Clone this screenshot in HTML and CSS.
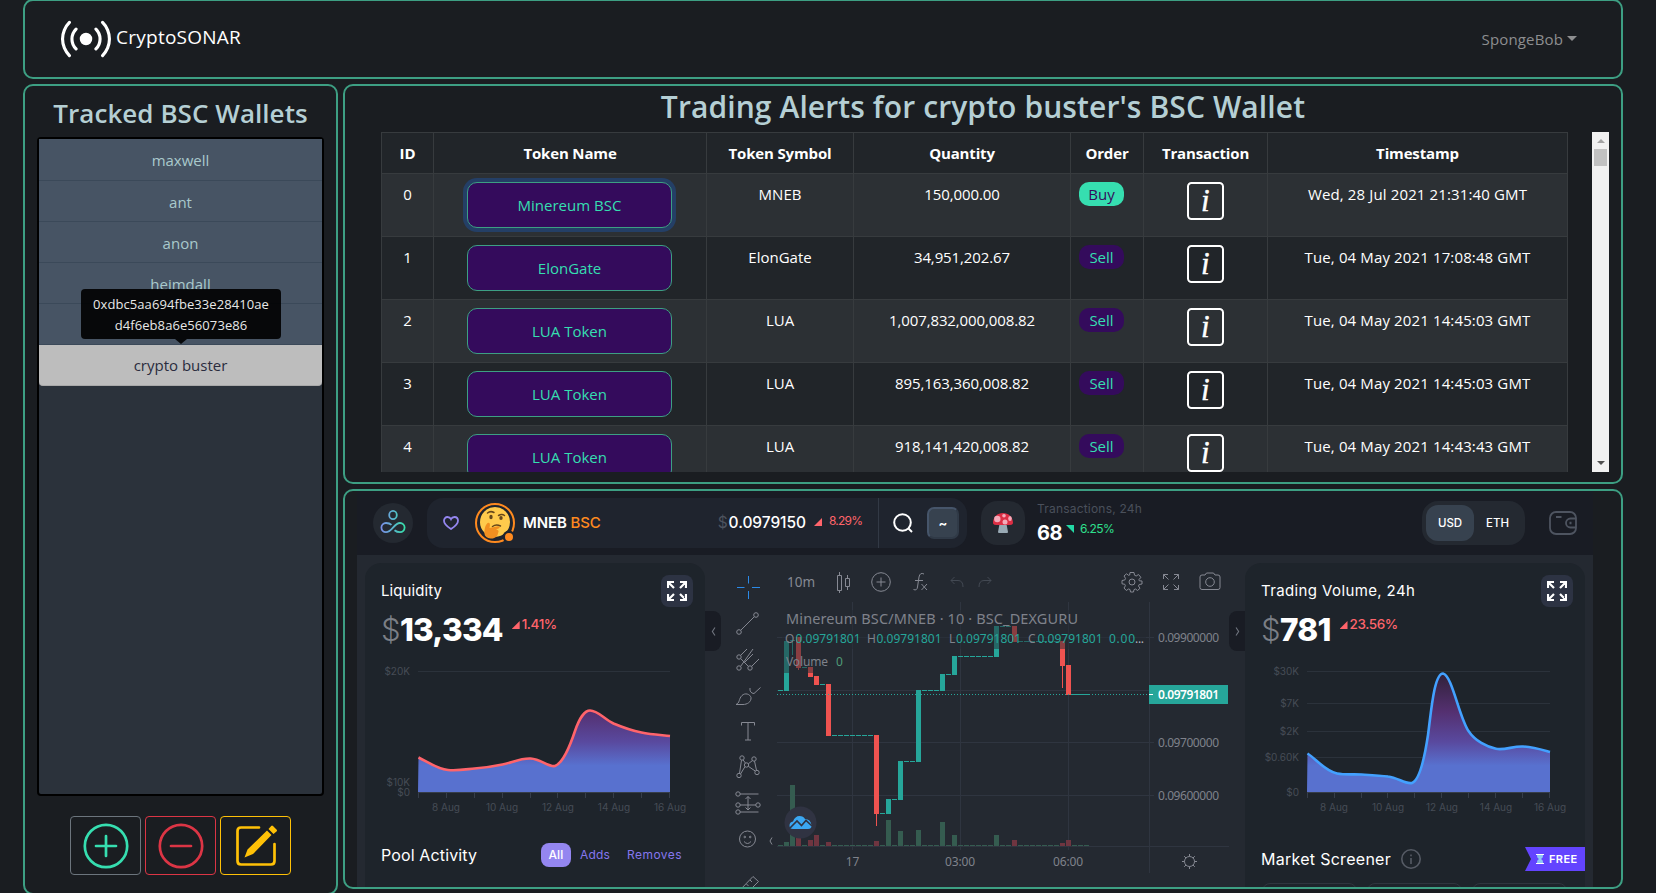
FILE: index.html
```html
<!DOCTYPE html>
<html lang="en">
<head>
<meta charset="utf-8">
<title>CryptoSONAR</title>
<link rel="stylesheet" href="styles.css">
</head>
<body>
<svg class="defs" aria-hidden="true">
  <defs>
    <linearGradient id="area" gradientUnits="userSpaceOnUse" x1="0" y1="672" x2="0" y2="792">
      <stop offset="0" stop-color="#2f2138"/><stop offset=".33" stop-color="#543070"/><stop offset=".58" stop-color="#59499e"/><stop offset=".78" stop-color="#5871cf"/><stop offset="1" stop-color="#5871cf"/>
    </linearGradient>
    <linearGradient id="guru" gradientUnits="userSpaceOnUse" x1="8" y1="0" x2="32" y2="0">
      <stop offset="0" stop-color="#7b8fe8"/><stop offset=".5" stop-color="#5bb4cf"/><stop offset="1" stop-color="#35e0a8"/>
    </linearGradient>
    <symbol id="info" viewBox="0 0 37 38">
      <rect x="1" y="1" width="35" height="36" rx="3.5" fill="none" stroke="#fff" stroke-width="2"/>
      <text x="18.3" y="29" text-anchor="middle" class="info-i">i</text>
    </symbol>
    <symbol id="expand" viewBox="0 0 20 20">
      <path d="M1 7V1H7M1.5 1.5 7 7M13 1H19V7M18.500 1.500 13 7M1 13V19H7M1.500 18.500 7 13M13 19H19V13M18.500 18.500 13 13" fill="none" stroke="#fff" stroke-width="2.200"/>
    </symbol>
  </defs>
</svg>

<header class="panel topnav">
  <a class="brand">
    <svg class="brand-icon" viewBox="0 0 16 16" fill="#fff"><path d="M3.05 3.05a7 7 0 0 0 0 9.9.5.5 0 0 1-.707.707 8 8 0 0 1 0-11.314.5.5 0 0 1 .707.707zm2.122 2.122a4 4 0 0 0 0 5.656.5.5 0 1 1-.708.708 5 5 0 0 1 0-7.072.5.5 0 0 1 .708.708zm5.656-.708a.5.5 0 0 1 .708 0 5 5 0 0 1 0 7.072.5.5 0 1 1-.708-.708 4 4 0 0 0 0-5.656.5.5 0 0 1 0-.708zm2.122-2.12a.5.5 0 0 1 .707 0 8 8 0 0 1 0 11.313.5.5 0 0 1-.707-.707 7 7 0 0 0 0-9.9.5.5 0 0 1 0-.707zM10 8a2 2 0 1 1-4 0 2 2 0 0 1 4 0z"/></svg>
    <span class="brand-name">CryptoSONAR</span>
  </a>
  <div class="user">SpongeBob<span class="caret"></span></div>
</header>

<main class="layout">
  <aside class="panel wallets">
    <h3 class="wallets-title">Tracked BSC Wallets</h3>
    <ul class="wallet-list">
      <li class="wallet">maxwell</li>
      <li class="wallet">ant</li>
      <li class="wallet">anon</li>
      <li class="wallet">heimdall</li>
      <li class="wallet"></li>
      <li class="wallet selected">crypto buster
        <div class="tooltip">0xdbc5aa694fbe33e28410ae<br>d4f6eb8a6e56073e86</div>
      </li>
    </ul>
    <div class="wallet-actions">
      <button class="act add"><svg viewBox="0 0 46 46"><circle cx="23" cy="23" r="21.200"/><path d="M23 13V33M13 23H33"/></svg></button>
      <button class="act remove"><svg viewBox="0 0 46 46"><circle cx="23" cy="23" r="21.200"/><path d="M13 23H33"/></svg></button>
      <button class="act edit"><svg viewBox="0 0 46 46"><path d="M26 4.500H8Q4.500 4.500 4.500 8V38Q4.500 41.500 8 41.500H38Q41.500 41.500 41.500 38V21"/><path class="solid" d="M34 7.500 38.500 12 20 31 11.500 34.500 14.500 26.500ZM35.500 6 38.200 3Q39 2 40 3L43.500 6.500Q44.500 7.500 43.500 8.500L40.500 11Z"/></svg></button>
    </div>
  </aside>

  <div class="content">
    <section class="panel alerts">
      <h2 class="alerts-title">Trading Alerts for crypto buster's BSC Wallet</h2>
      <div class="scroller">
        <div class="viewport">
          <table class="trades">
            <colgroup><col class="c-id"><col class="c-name"><col class="c-sym"><col class="c-qty"><col class="c-ord"><col class="c-tx"><col class="c-time"></colgroup>
            <thead><tr><th>ID</th><th>Token Name</th><th>Token Symbol</th><th>Quantity</th><th>Order</th><th>Transaction</th><th>Timestamp</th></tr></thead>
            <tbody>
              <tr><td>0</td><td><button class="token focus">Minereum BSC</button></td><td>MNEB</td><td class="qty">150,000.00</td><td class="order"><span class="badge buy">Buy</span></td><td><svg class="info"><use href="#info"/></svg></td><td class="time">Wed, 28 Jul 2021 21:31:40 GMT</td></tr>
              <tr><td>1</td><td><button class="token">ElonGate</button></td><td>ElonGate</td><td class="qty">34,951,202.67</td><td class="order"><span class="badge">Sell</span></td><td><svg class="info"><use href="#info"/></svg></td><td class="time">Tue, 04 May 2021 17:08:48 GMT</td></tr>
              <tr><td>2</td><td><button class="token">LUA Token</button></td><td>LUA</td><td class="qty">1,007,832,000,008.82</td><td class="order"><span class="badge">Sell</span></td><td><svg class="info"><use href="#info"/></svg></td><td class="time">Tue, 04 May 2021 14:45:03 GMT</td></tr>
              <tr><td>3</td><td><button class="token">LUA Token</button></td><td>LUA</td><td class="qty">895,163,360,008.82</td><td class="order"><span class="badge">Sell</span></td><td><svg class="info"><use href="#info"/></svg></td><td class="time">Tue, 04 May 2021 14:45:03 GMT</td></tr>
              <tr><td>4</td><td><button class="token">LUA Token</button></td><td>LUA</td><td class="qty">918,141,420,008.82</td><td class="order"><span class="badge">Sell</span></td><td><svg class="info"><use href="#info"/></svg></td><td class="time">Tue, 04 May 2021 14:43:43 GMT</td></tr>
            </tbody>
          </table>
        </div>
        <div class="scrollbar"><span class="arrow up"></span><span class="thumb"></span><span class="arrow down"></span></div>
      </div>
    </section>

    <section class="panel dex">
      <div class="dex-app">
        <div class="dex-bar">
          <div class="guru"><svg viewBox="0 0 40 40" fill="none" stroke="url(#guru)" stroke-width="1.800"><ellipse cx="20" cy="12" rx="3.800" ry="4.200"/><path d="M18.500 21.800C16.500 20 14.500 20 13 20A4.600 4.600 0 0 0 13 29.200C19 29.200 21 20 27 20A4.600 4.600 0 0 1 27 29.200C25 29.200 23.500 28.800 21.500 27.200"/></svg></div>
          <div class="search">
            <svg class="heart" viewBox="0 0 16 14" fill="none" stroke="#9486f0" stroke-width="1.800"><path d="M8 13C4 10.500 1 8 1 4.800 1 2.500 2.500 1 4.500 1 6 1 7.300 1.800 8 3.200 8.700 1.800 10 1 11.500 1 13.500 1 15 2.500 15 4.800 15 8 12 10.500 8 13Z"/></svg>
            <svg class="coin" viewBox="0 0 40 40"><circle cx="20" cy="20" r="19" fill="none" stroke="#ff8a1f" stroke-width="2"/><circle cx="20" cy="19" r="15" fill="#ffcb4c"/><g fill="none" stroke="#65471b" stroke-width="1.500" stroke-linecap="round"><path d="M12.500 10Q15.500 7.500 19 9.500M23.500 12.500Q27 10.500 29.500 12.500M17.500 23.500Q21 21 25.500 23"/></g><ellipse cx="16" cy="14" rx="1.700" ry="2.200" fill="#65471b"/><ellipse cx="26" cy="15" rx="1.700" ry="2" fill="#65471b"/><path d="M9.500 31C9 26 11 20 13.500 19.800 15.500 20 15 23 14.500 25L23 23.200C25 23 25 25 23.500 25.500L20.500 26.500C24 26.500 24 29 23 30 23 33 20 36 15.500 35.500 12 35 10 33.500 9.500 31Z" fill="#f19020"/><circle cx="34" cy="34" r="6.500" fill="#1f242e"/><circle cx="34" cy="34" r="4" fill="#ff8a1f"/></svg>
            <span class="pair">MNEB <span class="chain">BSC</span></span>
            <span class="price"><span class="cur">$</span>0.0979150</span>
            <span class="tri up"></span><span class="pct">8.29%</span>
            <div class="search-tools">
              <svg class="lens" viewBox="0 0 20 20" fill="none" stroke="#fff" stroke-width="2"><circle cx="9.500" cy="9.500" r="8.300"/><path d="M15.500 15.500 19 19"/></svg>
              <span class="key">~</span>
            </div>
          </div>
          <div class="shroom"><svg viewBox="0 0 20 20"><path d="M6.500 11H13.500L15 19Q15 20 14 20H6Q5 20 5 19Z" fill="#99aab5"/><path d="M0 10C0 4 4.500 0 10 0S20 4 20 10C20 12.500 16 12 10 12S0 12.500 0 10Z" fill="#dd2e44"/><g fill="#f4abba"><circle cx="4.300" cy="6" r="3.200"/><circle cx="12" cy="9" r="2.500"/><circle cx="11" cy="2.700" r="1.800"/><ellipse cx="17" cy="5.500" rx="1.800" ry="2.600"/></g></svg></div>
          <div class="txs">
            <div class="txs-label">Transactions, 24h</div>
            <div class="txs-row"><b class="txs-n">68</b><span class="tri down"></span><span class="txs-pct">6.25%</span></div>
          </div>
          <div class="units"><span class="unit on">USD</span><span class="unit">ETH</span></div>
          <svg class="purse" viewBox="0 0 28 24" fill="none" stroke="#4e5460" stroke-width="1.800"><rect x="1" y="1" width="26" height="22" rx="6"/><path d="M27 7.500H21.500A4.500 4.500 0 0 0 21.500 16.500H27M7 6H12.500"/><path d="M20.500 12H22.500" stroke-width="2.500"/></svg>
        </div>

        <div class="dex-body">
          <article class="card">
            <div class="card-head"><span class="card-title">Liquidity</span><span class="expand"><svg><use href="#expand"/></svg></span></div>
            <div class="figure"><span class="dollar">$</span><b class="amount">13,334</b><span class="tri up"></span><span class="delta">1.41%</span></div>
            <svg class="spark" viewBox="381 650 324 176">
              <path d="M418 671.500H670" stroke="#2b323b"/>
              <path d="M418.500 757.500C428 762 437 769 448 770C458 771 468 769 474.500 768.500S493 766.500 502.500 764.500S521 758 530.500 758.500C541 759 549 767.500 555 766C563 763 570 746 575 731C580 716 586 710.500 590 710.500C598 710.500 604 719 613.500 723.500C623 727.500 634 731 641.500 732.500C651 734.500 661 735 670 736V792H418Z" fill="url(#area)"/>
              <path d="M418.500 757.500C428 762 437 769 448 770C458 771 468 769 474.500 768.500S493 766.500 502.500 764.500S521 758 530.500 758.500C541 759 549 767.500 555 766C563 763 570 746 575 731C580 716 586 710.500 590 710.500C598 710.500 604 719 613.500 723.500C623 727.500 634 731 641.500 732.500C651 734.500 661 735 670 736" fill="none" stroke="#ff646b" stroke-width="2.600"/>
              <path d="M418 792.500H670M418.500 793V798M446.500 793V798M474.500 793V798M502.500 793V798M530.500 793V798M557.500 793V798M585.500 793V798M613.500 793V798M641.500 793V798M669.500 793V798" stroke="#363d49"/>
              <g class="tick end"><text x="410" y="674.500">$20K</text><text x="410" y="785.500">$10K</text><text x="410" y="795.500">$0</text></g>
              <g class="tick mid"><text x="446" y="811">8 Aug</text><text x="502" y="811">10 Aug</text><text x="558" y="811">12 Aug</text><text x="614" y="811">14 Aug</text><text x="670" y="811">16 Aug</text></g>
            </svg>
            <div class="pool"><span class="card-title wide">Pool Activity</span><span class="pool-tabs"><span class="ptab on">All</span><span class="ptab">Adds</span><span class="ptab removes">Removes</span></span></div>
          </article>

          <div class="tv">
            <div class="tv-left">
              <svg viewBox="0 0 28 28" class="cross"><path d="M14.500 3V10.500M14.500 18V26M3 14.500H10.500M18 14.500H26"/></svg>
              <svg viewBox="0 0 28 28"><circle cx="5" cy="23" r="2.300"/><circle cx="22" cy="6" r="2.300"/><path d="M6.700 21.300 20.300 7.700"/></svg>
              <svg viewBox="0 0 28 28"><circle cx="5" cy="12" r="2.200"/><circle cx="5" cy="23" r="2.200"/><circle cx="16" cy="23" r="2.200"/><path d="M6.700 10.300 13 4M6.600 21.400 19 4M6.600 13.500 14.500 21.500M17.500 21.500 25 14M11 17 19 9"/></svg>
              <svg viewBox="0 0 28 28"><path d="M2 23.500C6 22 4.500 18 8 14.500C11 11.500 16 13 17 16.500C17.500 21 13 23.500 9 23.500ZM16 7C15.500 10 17 12.500 20 12.500L26.500 6.500"/></svg>
              <svg viewBox="0 0 28 28"><path d="M7.500 8.500V5.500H20.500V8.500M14 5.500V23M11 23H17"/></svg>
              <svg viewBox="0 0 28 28"><circle cx="8" cy="5" r="2.200"/><circle cx="20" cy="6" r="2.200"/><circle cx="12.500" cy="12" r="2.200"/><circle cx="5" cy="22.500" r="2.200"/><circle cx="23" cy="19.500" r="2.200"/><path d="M7.500 7.200 5.500 20.300M9 6.800 11.500 10.200M14.300 10.800 18.500 7.500M20.500 8.200 22.500 17.300M11 13.600 6.500 21M14.300 13.300 21.200 18"/></svg>
              <svg viewBox="0 0 28 28"><circle cx="4" cy="5" r="2.200"/><circle cx="4" cy="16" r="2.200"/><circle cx="24" cy="16" r="2.200"/><circle cx="4" cy="23" r="2.200"/><path d="M6 5H24.500M6 16H22M6 23H24.500M14 7.500V21M11.500 10 14 7.500 16.500 10M11.500 18.500 14 21 16.500 18.500"/></svg>
              <svg viewBox="0 0 28 28"><circle cx="13.500" cy="14" r="8"/><path d="M10 16.500Q13.500 20.500 17 16.500"/><circle cx="10.800" cy="12" r=".8"/><circle cx="16.200" cy="12" r=".8"/></svg>
              <svg viewBox="0 0 28 28" class="ruler"><path d="M5 19 19 4.500 24.500 9.500 10 24ZM16 8 18 10M12.500 12 14.500 14"/></svg>
            </div>
            <div class="tv-top">
              <span class="interval">10m</span>
              <svg class="t1" viewBox="0 0 28 28"><path d="M8.500 7.500H12.500V22.500H8.500ZM10.500 4V7.500M10.500 22.500V25M16.500 10.500H20.500V18.500H16.500ZM18.500 7V10.500M18.500 18.500V22"/></svg>
              <svg class="t2" viewBox="0 0 28 28"><circle cx="14" cy="14" r="9.300"/><path d="M14 9.500V18.500M9.500 14H18.500"/></svg>
              <svg class="t3" viewBox="0 0 28 28"><path d="M18 6Q14 4 13 9L11.500 19Q11 23 7.500 21.500M9 12.500H17M15.500 16 21 22M21 16 15.500 22"/></svg>
              <svg class="t4 dim" viewBox="0 0 28 28"><path d="M11.500 9 8 12.500 11.500 16M8 12.500H15Q20 12.500 20 19"/></svg>
              <svg class="dim" viewBox="0 0 28 28"><path d="M16.500 9 20 12.500 16.500 16M20 12.500H13Q8 12.500 8 19"/></svg>
              <svg class="t5" viewBox="0 0 28 28"><circle cx="14" cy="14" r="3"/><path d="M12 4.500H16L16.500 7.200 18.200 8 20.500 6.500 23 9.500 20.800 11.500 21.300 12.800 24 13V16L21.200 16.500 20.500 18 22 20.300 19.500 22.500 17.500 21 16 21.600 15.500 24H12.500L12 21.500 10.500 21 8.300 22.500 6 20 7.400 17.800 6.800 16.300 4 15.800V12.500L6.800 12 7.500 10.300 6 8 8.500 5.800 10.500 7.300 11.700 7Z"/></svg>
              <svg class="t6" viewBox="0 0 28 28"><path d="M6.500 11V6.500H11M6.500 6.500 11.500 11.500M17 6.500H21.500V11M21.500 6.500 16.500 11.500M6.500 17V21.500H11M6.500 21.500 11.500 16.500M17 21.500H21.500V17M21.500 21.500 16.500 16.500"/></svg>
              <svg class="t7" viewBox="0 0 28 28"><path d="M6 7H9L10.500 5H17.500L19 7H22Q24 7 24 9V19.500Q24 21.500 22 21.500H6Q4 21.500 4 19.500V9Q4 7 6 7Z"/><circle cx="14" cy="14" r="4.300"/></svg>
            </div>
            <svg class="candles" viewBox="777 602 468 285" shape-rendering="crispEdges">
              <path class="grid" d="M777 637.500H1154M777 690.500H1154M777 742.500H1154M777 795.500H1154M852.500 602V850M960.500 602V850M1068.500 602V850"/>
              <path class="axis" d="M1149.500 602V873M777 846.500H1229"/>
              <g class="volume">
                <path stroke="#355c50" stroke-dasharray="5 1" d="M778 845.500H1089"/>
                <path fill="#355c50" d="M784 842h5v4h-5zM790 785h5v61h-5zM886 820h5v26h-5zM898 831h5v15h-5zM916 830h5v16h-5zM940 822h5v24h-5zM952 835h5v11h-5zM994 835h5v11h-5z"/>
                <path fill="#6f3540" d="M796 832h5v14h-5zM808 840h5v6h-5zM814 835h5v11h-5zM826 842h5v4h-5zM874 841h5v5h-5zM1012 840h5v6h-5zM1060 843h5v3h-5zM1066 840h5v6h-5z"/>
              </g>
              <path class="teal-line" d="M778 690.500H783M790 640.500H795M792.500 640V655M802 667.500H807M820 684.500H825M880 813.500H885M892 799.500H897M946 674.500H951M1072 694.500H1090"/>
              <path class="teal-line" stroke-dasharray="5 1" d="M832 735.500H873M904 761.500H915M922 690.500H939M958 656.500H993M1000 626.500H1011M1018 641.500H1059"/>
              <path class="teal" d="M784 641h5v50h-5zM886 799h5v15h-5zM898 761h5v39h-5zM916 690h5v72h-5zM940 674h5v17h-5zM952 656h5v19h-5zM994 626h5v31h-5z"/>
              <path class="red" d="M796 637h5v31h-5zM798 668h1v2h-1zM808 667h5v10h-5zM814 676h5v9h-5zM826 684h5v52h-5zM874 735h5v79h-5zM876 814h1v12h-1zM1012 626h5v16h-5zM1060 641h5v25h-5zM1062 666h1v22h-1zM1066 665h5v30h-5z"/>
              <path class="teal-line" stroke-dasharray="1 2" d="M777 694.500H1149"/>
              <path class="veil" d="M782 610H1146V649H850V673H782Z"/>
              <g class="tvt">
                <text x="786" y="624" class="sym" textLength="292">Minereum BSC/MNEB · 10 · BSC_DEXGURU</text>
                <text x="785" y="643">O</text><text x="867" y="643">H</text><text x="949" y="643">L</text><text x="1028" y="643">C</text>
                <g class="num"><text x="795.500" y="643" textLength="65">0.09791801</text><text x="876.500" y="643" textLength="65">0.09791801</text><text x="956" y="643" textLength="65">0.09791801</text><text x="1037.500" y="643" textLength="65">0.09791801</text><text x="1109" y="643" textLength="26">0.00</text></g>
                <text x="1135" y="643" class="dots" textLength="9">...</text>
                <text x="786" y="666" textLength="42">Volume</text><text x="836" y="666" class="vol0">0</text>
                <g class="axis-t"><text x="1158" y="642" textLength="61">0.09900000</text><text x="1158" y="747" textLength="61">0.09700000</text><text x="1158" y="800" textLength="61">0.09600000</text></g>
                <g class="axis-t mid"><text x="852.500" y="866">17</text><text x="960" y="866" textLength="30">03:00</text><text x="1068" y="866" textLength="30">06:00</text></g>
              </g>
              <path fill="#26a69a" d="M1149 685H1228V704H1149Z"/><path d="M1149 694.500H1153" stroke="#fff"/>
              <text x="1158" y="699" class="tag" textLength="61">0.09791801</text>
              <g shape-rendering="auto">
                <circle cx="800.500" cy="822.500" r="16" fill="#303342"/>
                <path d="M793 829Q789.500 829 789.500 825.500 789.500 822 793 821.500 795 816 799.500 816 803.500 816 805 819 810.500 819 811.500 825 812 829 808 829Z" fill="#3ba7f2"/><path d="M790 828 797 821 801.500 825.500 806 820.500 812 826" fill="none" stroke="#303342" stroke-width="1.600"/>
                <g fill="none" stroke="#868993"><circle cx="1189.500" cy="861.500" r="5"/><path d="M1189.500 854V856.500M1189.500 866.500V869M1182 861.500H1184.500M1194.500 861.500H1197M1184.200 856.200 1186 858M1193 865 1194.800 866.800M1184.200 866.800 1186 865M1193 858 1194.800 856.200"/></g>
              </g>
            </svg>
            <svg class="mini" viewBox="0 0 4 8"><path d="M3 .5 1 4 3 7.500"/></svg>
            <span class="flap left"><svg viewBox="0 0 4 8"><path d="M3.300 .5 1 4 3.300 7.500"/></svg></span>
            <span class="flap right"><svg viewBox="0 0 4 8"><path d="M.7 .5 3 4 .7 7.500"/></svg></span>
          </div>

          <article class="card">
            <div class="card-head"><span class="card-title vol">Trading Volume, 24h</span><span class="expand"><svg><use href="#expand"/></svg></span></div>
            <div class="figure"><span class="dollar">$</span><b class="amount">781</b><span class="tri up"></span><span class="delta">23.56%</span></div>
            <svg class="spark" viewBox="1261 650 324 176">
              <path d="M1307 671.500H1550M1307 703.500H1550M1307 731.500H1550M1307 757.500H1550" stroke="#2b323b"/>
              <path d="M1307.500 753.500C1316 759 1325 771 1337 773.500C1345 775 1353 774 1361.500 774.500S1380 775.500 1388 776.500C1398 777.500 1405 784.500 1412 783C1420 780 1425 755 1428 735C1431 713 1434 673.500 1443 673.500C1452 675 1459 717 1468.500 731C1475 741 1487 747 1496 748.800C1505 750.500 1513 746 1523 746.500C1533 747 1541 749.500 1550 752V792H1307Z" fill="url(#area)"/>
              <path d="M1307.500 753.500C1316 759 1325 771 1337 773.500C1345 775 1353 774 1361.500 774.500S1380 775.500 1388 776.500C1398 777.500 1405 784.500 1412 783C1420 780 1425 755 1428 735C1431 713 1434 673.500 1443 673.500C1452 675 1459 717 1468.500 731C1475 741 1487 747 1496 748.800C1505 750.500 1513 746 1523 746.500C1533 747 1541 749.500 1550 752" fill="none" stroke="#43a1ff" stroke-width="2.600"/>
              <path d="M1307 792.500H1550M1307.500 793V798M1334.500 793V798M1361.500 793V798M1387.500 793V798M1414.500 793V798M1441.500 793V798M1468.500 793V798M1495.500 793V798M1522.500 793V798M1549.500 793V798" stroke="#363d49"/>
              <g class="tick end"><text x="1299" y="674.500">$30K</text><text x="1299" y="706.500">$7K</text><text x="1299" y="734.500">$2K</text><text x="1299" y="760.500">$0.60K</text><text x="1299" y="795.500">$0</text></g>
              <g class="tick mid"><text x="1334" y="811">8 Aug</text><text x="1388" y="811">10 Aug</text><text x="1442" y="811">12 Aug</text><text x="1496" y="811">14 Aug</text><text x="1550" y="811">16 Aug</text></g>
            </svg>
            <div class="screener">
              <span class="card-title market">Market Screener</span>
              <svg class="hint" viewBox="0 0 20 20" fill="none" stroke="#565b65" stroke-width="1.600"><circle cx="10" cy="10" r="9.200"/><path d="M10 9V15M10 5.500V7.200"/></svg>
              <span class="free"><svg viewBox="0 0 8 10"><path d="M1 0H7V2Q7 4 5 5 7 6 7 8V10H1V8Q1 6 3 5 1 4 1 2Z" fill="#8fc7f5"/><path d="M0 .5H8M0 9.500H8" stroke="#fff"/></svg>FREE</span>
            </div>
            <div class="boxes"><span></span><span></span><span></span></div>
          </article>
        </div>
      </div>
    </section>
  </div>
</main>
</body>
</html>
```
FILE: styles.css
```css
*{box-sizing:border-box}
html,body{height:893px;overflow:hidden}
body{margin:0;padding:0 33px 0 23px;background:#1a1d21;color:#fff;font:15px/24px "Open Sans","Noto Sans",sans-serif}
h2,h3,ul{margin:0;padding:0}
button{font:inherit;background:none;padding:0}
svg{display:block;flex:none}
.defs{position:absolute;width:0;height:0}
.panel{border:2px solid #3d9f83;border-radius:10px;overflow:hidden}

.topnav{display:flex;justify-content:space-between;align-items:center;height:80px;margin-top:-1px;padding:0 44px 0 36px}
.brand{display:flex;align-items:center;gap:5px}
.brand-icon{width:50px;height:50px}
.brand-name{font-size:19px;line-height:26px;letter-spacing:.25px;padding-bottom:5px}
.user{display:flex;align-items:center;color:#8d8e90;letter-spacing:.15px}
.caret{margin:0 0 2px 4px;border:5px solid transparent;border-top-color:#8d8e90;border-bottom:0}

.layout{display:grid;grid-template-columns:315px 1fr;gap:5px;margin-top:5px;height:811px}
.wallets{padding:9px 12px 0}
.wallets-title{color:#b5cfd4;font-size:26px;line-height:36px;font-weight:600;letter-spacing:.05px;text-align:center;white-space:nowrap}
.wallet-list{list-style:none;height:659px;margin-top:6px;border:2px solid #000;border-radius:4px;background:#2b323b}
.wallet{height:41px;line-height:42px;text-align:center;color:#a9c9cc;background:#475464;border-bottom:1px solid #3b4959}
.wallet:first-child{height:42px}
.wallet.selected{position:relative;line-height:41px;background:#bdbdbd;color:#2a2c3e;border-color:#a9a9a9;border-radius:0 0 4px 4px}
.tooltip{position:absolute;left:42px;bottom:46px;width:200px;height:50px;padding-top:5px;border-radius:4px;background:rgba(0,0,0,.9);color:#e8e8e8;font-size:13px;line-height:21px;letter-spacing:.08px}
.tooltip::after{content:"";position:absolute;left:94px;top:50px;border:6px solid transparent;border-top:5px solid rgba(0,0,0,.9);border-bottom:0}
.wallet-actions{display:flex;justify-content:center;gap:4px;margin-top:20px}
.act{display:grid;place-items:center;width:71px;height:59px;border:1px solid;border-radius:4px}
.act svg{width:46px;height:46px;fill:none;stroke:currentColor;stroke-width:2.700;stroke-linecap:round}
.act.add{color:#36deb0;border-color:#6c757d}
.remove{color:#dc3545}
.edit{color:#ffc107}
.act .solid{fill:currentColor;stroke:none}

.content{display:grid;grid-template-rows:400px 400px;gap:5px}
.alerts{padding-left:36px}
.alerts-title{margin-left:-36px;color:#b5cfd4;font-size:30px;line-height:41px;font-weight:600;letter-spacing:.1px;text-align:center}
.scroller{display:flex;gap:24px;height:340px;margin-top:5px}
.viewport{width:1187px;overflow:hidden}
.trades{width:1187px;table-layout:fixed;border-collapse:collapse;text-align:center}
.c-id{width:52px}.c-name{width:273px}.c-sym{width:147px}.c-qty{width:217px}.c-ord{width:73px}.c-tx{width:124px}.c-time{width:300px}
.trades th,.trades td{padding:8px 0;border:1px solid #373b3e;background:#212529;vertical-align:top}
.trades tbody tr:nth-child(odd) td{background:#2c3034}
.trades th{font-weight:700;letter-spacing:-.15px}
.trades .time{letter-spacing:.13px}
.trades .qty{letter-spacing:-.1px}
.trades .order{text-align:left;padding-left:8px}
.token{display:block;width:205px;height:46px;margin:0 0 0 33px;border:1px solid #3d9f83;border-radius:10px;background:#340b5c;color:#36deb0}
.token.focus{box-shadow:0 0 0 4px #243f66}
.badge{display:block;width:45px;height:24px;border-radius:10px;text-align:center;background:#340b5c;color:#36deb0}
.badge.buy{background:#36deb0;color:#340b5c}
.info{width:37px;height:38px;margin:0 auto}
.info-i{font:italic 400 31px "Liberation Serif",serif;fill:#fff;stroke:#fff;stroke-width:.4px}
.scrollbar{display:flex;flex-direction:column;align-items:center;width:17px;background:#f1f1f1}
.arrow{border:4px solid transparent}
.arrow.up{margin-top:7px;border-top:0;border-bottom-color:#a3a3a3}
.arrow.down{margin:auto 0 7px;border-bottom:0;border-top-color:#505050}
.thumb{width:13px;height:17px;margin-top:6px;background:#c1c1c1}

.dex{padding:0 0 0 12px;font-family:Inter,"Open Sans",sans-serif;font-size:15px}
.dex-app{width:1236px}
.dex-bar{display:flex;align-items:center;height:64px;padding:0 16px;background:#191c24}
.guru{width:40px;height:40px;border-radius:50%;background:#242931}
.guru svg{width:40px;height:40px}
.search{display:flex;align-items:center;width:540px;height:50px;margin-left:14px;padding:0 8px 0 16px;border-radius:16px;background:#1f242e}
.heart{width:16px;height:14px}
.coin{width:40px;height:40px;margin:0 8px 0 16px}
.pair{font-weight:600;letter-spacing:-.1px}
.chain{color:#ff8a1f;font-weight:500}
.price{margin-left:auto;font-weight:500;font-size:15.500px;letter-spacing:-.05px}
.cur{color:#4d535e;font-weight:400;margin-right:1px}
.tri{width:8px;height:8px}
.tri.up{background:#ff646b;clip-path:polygon(100% 0,100% 100%,0 100%)}
.tri.down{background:#23d9a5;clip-path:polygon(0 0,100% 0,100% 100%)}
.search .tri{margin:-2px 7px 0 8px}
.pct{width:33px;margin-top:-4px;color:#ff646b;font-size:12px;letter-spacing:-.8px}
.search-tools{display:flex;align-items:center;height:50px;margin-left:16px;padding-left:14px;border-left:1px solid #323945}
.lens{width:20px;height:20px}
.key{width:32px;height:32px;margin-left:14px;border:2px solid #46556a;border-right-color:#303a47;border-bottom-color:#303a47;border-radius:7px;background:#37424f;text-align:center;font-weight:700;line-height:28px;font-size:13px}
.shroom{display:grid;place-items:center;width:44px;height:44px;margin-left:14px;border-radius:16px;background:#242931}
.shroom svg{width:20px;height:20px}
.txs{margin-left:12px;height:44px}
.txs-label{color:#4a505b;font-size:12px;line-height:16px;letter-spacing:.2px}
.txs-row{display:flex;align-items:flex-start;line-height:28px;padding-top:2px}
.txs-n{font-size:20px;letter-spacing:-.5px}
.txs-row .tri{margin:6px 6px 0 4px}
.txs-pct{margin-top:-4px;color:#2fe08f;font-size:12px;letter-spacing:-.5px}
.units{display:flex;align-items:center;width:103px;height:44px;margin-left:auto;padding:0 4px;border-radius:16px;background:#242931}
.unit{width:47px;font-size:11.500px;font-weight:500;text-align:center;line-height:36px}
.unit.on{width:48px;border-radius:12px;background:#37424f}
.purse{width:28px;height:24px;margin-left:24px}

.dex-body{display:grid;grid-template-columns:340px 540px 340px;height:332px;padding:0 8px;background:#242931}
.card{height:340px;margin-top:8px;padding:12px 12px 0 16px;border-radius:16px;background:#1e242b}
.card-head{display:flex;justify-content:space-between;height:32px}
.card-title{line-height:31px;letter-spacing:.1px}
.card-title.vol{letter-spacing:.38px}
.card-title.wide{font-size:16px;letter-spacing:.13px}
.card-title.market{font-size:16px;letter-spacing:.28px}
.expand{display:grid;place-items:center;width:32px;height:32px;border-radius:8px;background:#2d3343}
.expand svg{width:20px;height:20px}
.figure{display:flex;align-items:flex-start;height:43px;line-height:46px}
.dollar{font-size:31px;font-weight:300;color:#7b7f86;width:19px}
.amount{font-size:31.500px;letter-spacing:-.8px;font-weight:800}
.figure .tri{margin:14px 2px 0 9px}
.delta{color:#ff646b;font-size:13.500px;font-weight:500;letter-spacing:-.4px;line-height:34px}
.spark{width:324px;height:176px;margin-right:-12px}
.tick{font:10px Inter,sans-serif;fill:#464c56}
.end{text-anchor:end}
.mid{text-anchor:middle}
.pool{display:flex;justify-content:space-between;align-items:center;height:24px;margin-top:17px}
.pool-tabs{display:flex;align-items:center;padding-right:11px}
.ptab{font-size:12px;color:#8577ee;letter-spacing:.17px;margin-left:9px}
.ptab.removes{letter-spacing:.45px;margin-left:17px}
.ptab.on{width:30px;border-radius:8px;background:#9486f0;color:#fff;font-weight:500;text-align:center;margin:0}
.screener{display:flex;align-items:center;height:24px;margin:21px -12px 0 0}
.hint{width:20px;height:20px;margin-left:10px}
.free{display:flex;align-items:center;gap:5px;width:60px;height:24px;margin-left:auto;padding-left:11px;background:#6344ff;clip-path:polygon(0 0,100% 0,100% 100%,0 100%,6px 50%);font-size:11px;font-weight:600;letter-spacing:.4px}
.free svg{width:8px;height:10px}
.boxes{display:flex;gap:10px;margin-top:12px;padding-left:1px}
.boxes span{width:95px;height:30px;border:1px solid #2f353e;border-radius:8px;flex:none}

.tv{position:relative;display:grid;grid-template-columns:72px 468px;grid-template-rows:47px 285px}
.tv svg{fill:none;stroke:#868993}
.tv-left{grid-row:1/3;display:flex;flex-direction:column;gap:8px;padding:18px 0 0 29px;overflow:hidden}
.tv-left svg,.tv-top svg{width:28px;height:28px}
.tv-left .cross{stroke:#2b8ae8}
.tv-left .ruler{margin-top:11px}
.tv-top{display:flex;align-items:center;padding:7px 21px 0 10px}
.interval{width:42px;color:#868993;font:13.500px "Noto Sans",sans-serif}
.tv-top .t2{margin-left:10px}
.tv-top .t3{margin-left:11px}
.tv-top .t4{margin-left:9px}
.tv-top .t5{margin-left:auto}
.tv-top .t6,.tv-top .t7{margin-left:11px}
.tv-top .dim{stroke:#434953}
.tv .candles{width:468px;height:285px;stroke:none}
.tv .grid,.tv .axis{stroke:#2f3540}
.teal{fill:#26a69a}
.teal-line{stroke:#26a69a}
.red{fill:#ef5350}
.veil{fill:#242931;fill-opacity:.5}
.tvt{font:12px "Noto Sans",sans-serif;fill:#7f828b}
.tvt .sym{font-size:14.500px}
.num{fill:#26a69a}
.dots{fill:#b2b5be}
.vol0{fill:#4f9b77}
.tag{font:600 12px "Noto Sans",sans-serif;fill:#fff}
.tv .mini{position:absolute;left:64px;top:282px;width:4px;height:8px}
.flap{position:absolute;top:56px;display:grid;place-items:center;width:16px;height:40px;background:#191c24}
.flap svg{width:5px;height:9px;stroke:#70757f}
.flap.left{left:0;border-radius:0 8px 8px 0}
.flap.right{right:0;border-radius:8px 0 0 8px}
```
